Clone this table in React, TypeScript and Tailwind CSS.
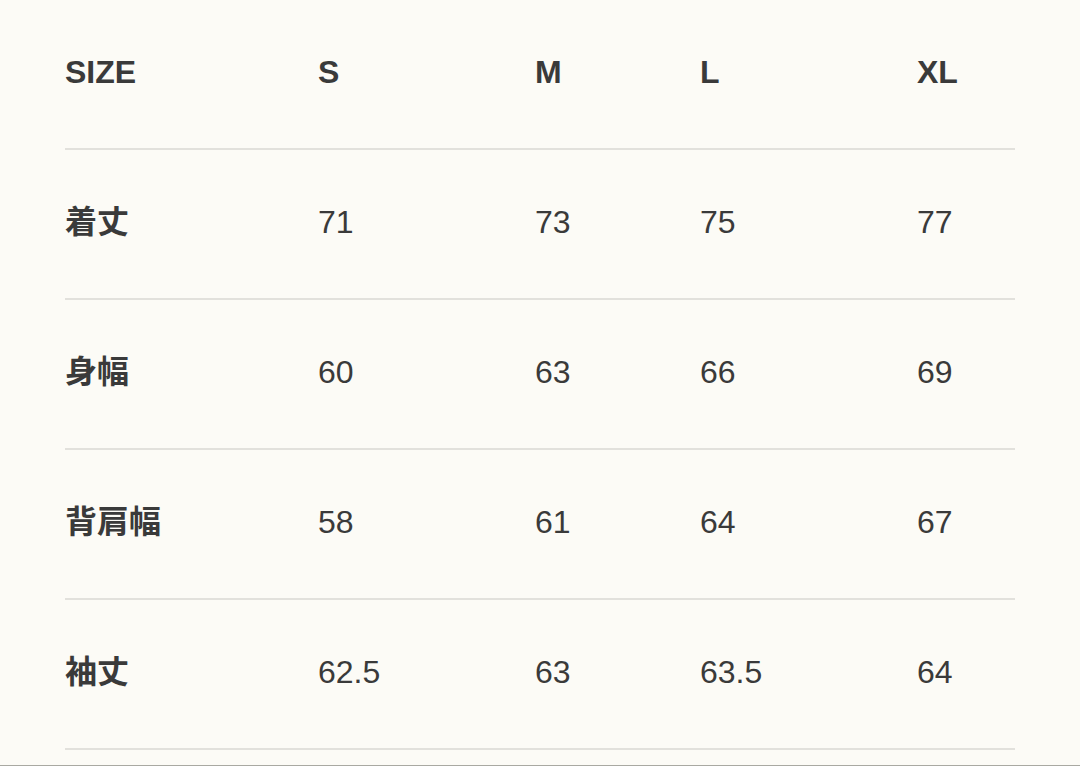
const columns = ['SIZE', 'S', 'M', 'L', 'XL'];

const rows = [
	{ label: '着丈', values: ['71', '73', '75', '77'] },
	{ label: '身幅', values: ['60', '63', '66', '69'] },
	{ label: '背肩幅', values: ['58', '61', '64', '67'] },
	{ label: '袖丈', values: ['62.5', '63', '63.5', '64'] },
];

const grid = 'grid grid-cols-[253px_217px_165px_217px_98px] h-[150px] border-b-2 border-[#e2e1dc] items-center pb-[4px]';

export default function App() {
	return (
		<div
			className="h-[766px] bg-[#fcfbf6] border-b border-[#a9a9a2] px-[65px] text-[#3a3a3a]"
			style={{ fontFamily: '"Liberation Sans", Arial, "Noto Sans CJK JP", sans-serif' }}
		>
			<div className={grid}>
				{columns.map((col) => (
					<div key={col} className="text-[32px] font-bold leading-none">
						{col}
					</div>
				))}
			</div>

			{rows.map((row) => (
				<div key={row.label} className={grid}>
					<div className="text-[32px] font-bold leading-none">{row.label}</div>
					{row.values.map((value, i) => (
						<div key={i} className="text-[32px] leading-none">
							{value}
						</div>
					))}
				</div>
			))}
		</div>
	);
}
